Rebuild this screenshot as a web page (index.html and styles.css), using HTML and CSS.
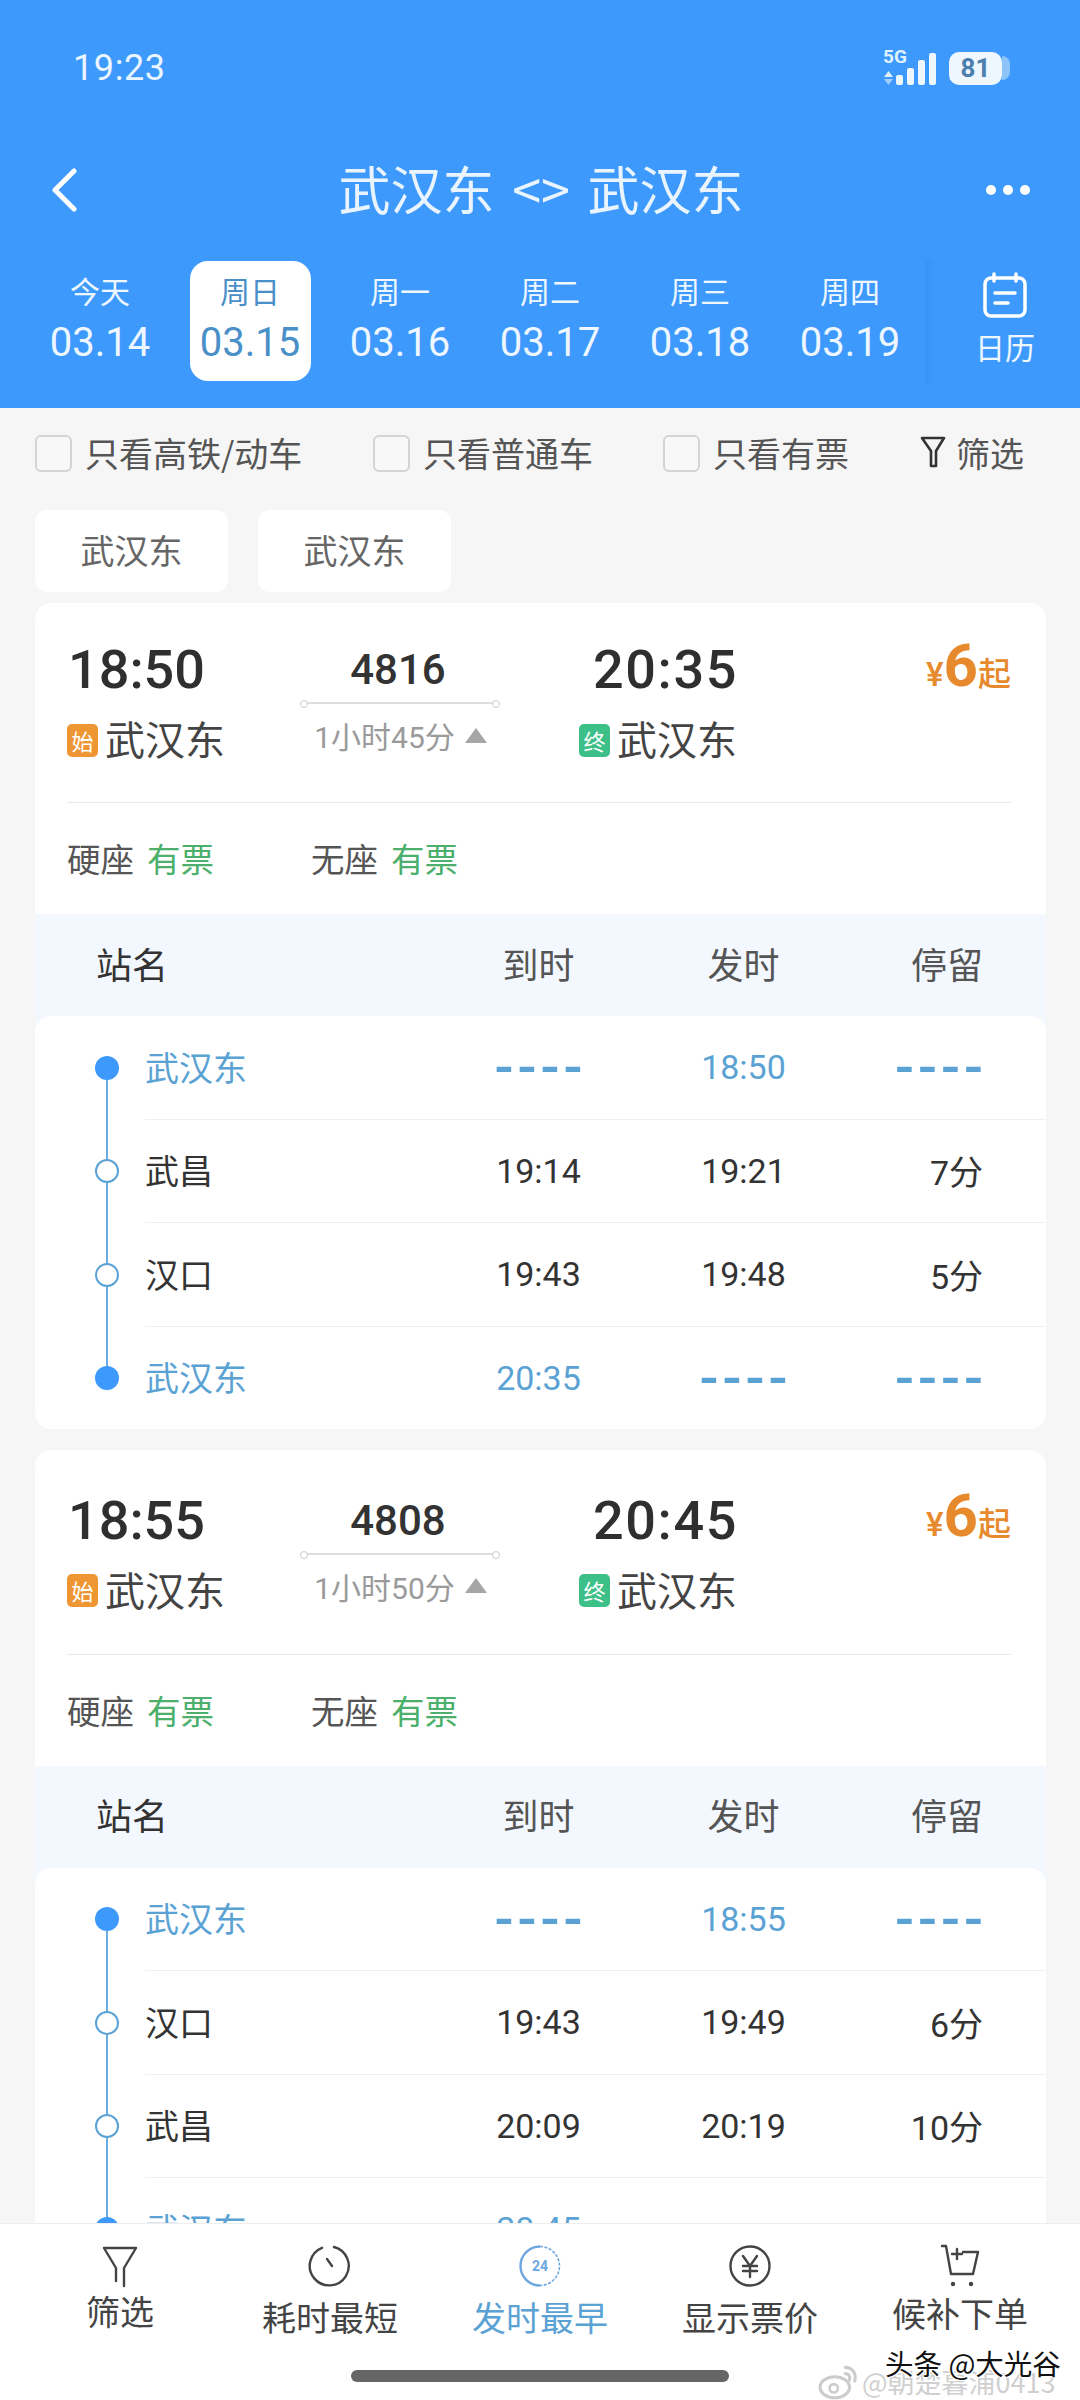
FILE: index.html
```html
<!DOCTYPE html>
<html lang="zh-CN">
<head>
<meta charset="utf-8">
<title>武汉东 &lt;&gt; 武汉东</title>
<link rel="stylesheet" href="styles.css">
</head>
<body>
<div class="app">
  <header class="header">
    <div class="status">
      <span class="clock">19:23</span>
      <div class="status-right">
        <div class="net">
          <div class="net-label"><span class="net-5g">5G</span><svg class="net-arrows" viewBox="0 0 9 14"><path d="M4.5 0L9 6H0Z" fill="#dff0ff"/><path d="M4.5 14L9 8H0Z" fill="#9fd0fb"/></svg></div>
          <svg class="bars" viewBox="0 0 40 32"><rect x="0" y="22" width="7" height="10" rx="2"/><rect x="11" y="15" width="7" height="17" rx="2"/><rect x="22" y="7" width="7" height="25" rx="2"/><rect x="33" y="0" width="7" height="32" rx="2"/></svg>
        </div>
        <div class="battery"><span class="battery-level">81</span><span class="battery-cap"></span></div>
      </div>
    </div>
    <div class="titlebar">
      <svg class="back" viewBox="0 0 28 44"><path d="M24 3L5 22l19 19" fill="none" stroke="#fff" stroke-width="5" stroke-linecap="round" stroke-linejoin="round"/></svg>
      <h1 class="title">武汉东 &lt;&gt; 武汉东</h1>
      <div class="more"><i></i><i></i><i></i></div>
    </div>
    <div class="dates">
      <div class="date"><span class="dow">今天</span><span class="day">03.14</span></div>
      <div class="date date-on"><span class="dow">周日</span><span class="day">03.15</span></div>
      <div class="date"><span class="dow">周一</span><span class="day">03.16</span></div>
      <div class="date"><span class="dow">周二</span><span class="day">03.17</span></div>
      <div class="date"><span class="dow">周三</span><span class="day">03.18</span></div>
      <div class="date"><span class="dow">周四</span><span class="day">03.19</span></div>
      <div class="cal">
        <svg class="cal-icon" viewBox="0 0 46 46"><path d="M12 2v7M34 2v7" stroke="#fff" stroke-width="3.5" stroke-linecap="round"/><rect x="3" y="6" width="40" height="38" rx="6" fill="none" stroke="#fff" stroke-width="3.5"/><path d="M13 21h20M13 31h13" stroke="#fff" stroke-width="3.5" stroke-linecap="round"/></svg>
        <span class="cal-label">日历</span>
      </div>
    </div>
  </header>

  <main class="main">
    <div class="filters">
      <label class="check"><span class="box"></span>只看高铁/动车</label>
      <label class="check"><span class="box"></span>只看普通车</label>
      <label class="check"><span class="box"></span>只看有票</label>
      <div class="filter-link">
        <svg class="filter-icon" viewBox="0 0 26 32"><path d="M2 2h22l-8 13v15h-5V15Z" fill="none" stroke="#333" stroke-width="2.6" stroke-linejoin="round"/></svg>筛选
      </div>
    </div>
    <div class="chips"><span class="chip">武汉东</span><span class="chip">武汉东</span></div>

    <article class="card">
      <div class="trip">
        <div class="dep-time">18:50</div>
        <div class="num">4816</div>
        <div class="arr-time">20:35</div>
        <div class="price"><small>¥</small><b>6</b><small class="qi">起</small></div>
        <div class="rail-line"></div>
        <div class="dep-st"><span class="tag tag-start">始</span>武汉东</div>
        <div class="dur">1小时45分<span class="tri"></span></div>
        <div class="arr-st"><span class="tag tag-end">终</span>武汉东</div>
      </div>
      <div class="seats">
        <div class="seat"><span>硬座</span><span class="avail">有票</span></div>
        <div class="seat"><span>无座</span><span class="avail">有票</span></div>
      </div>
      <div class="table">
        <div class="thead"><span class="th-name">站名</span><span class="c">到时</span><span class="c">发时</span><span class="r">停留</span></div>
        <div class="stops">
          <div class="stop stop-first stop-hi"><div class="rail"><i class="dot"></i></div><div class="cells"><span>武汉东</span><span class="c dash">----</span><span class="c">18:50</span><span class="r dash">----</span></div></div>
          <div class="stop"><div class="rail"><i class="dot ring"></i></div><div class="cells"><span>武昌</span><span class="c">19:14</span><span class="c">19:21</span><span class="r">7分</span></div></div>
          <div class="stop"><div class="rail"><i class="dot ring"></i></div><div class="cells"><span>汉口</span><span class="c">19:43</span><span class="c">19:48</span><span class="r">5分</span></div></div>
          <div class="stop stop-last stop-hi"><div class="rail"><i class="dot"></i></div><div class="cells"><span>武汉东</span><span class="c">20:35</span><span class="c dash">----</span><span class="r dash">----</span></div></div>
        </div>
      </div>
    </article>

    <article class="card card-next">
      <div class="trip">
        <div class="dep-time">18:55</div>
        <div class="num">4808</div>
        <div class="arr-time">20:45</div>
        <div class="price"><small>¥</small><b>6</b><small class="qi">起</small></div>
        <div class="rail-line"></div>
        <div class="dep-st"><span class="tag tag-start">始</span>武汉东</div>
        <div class="dur">1小时50分<span class="tri"></span></div>
        <div class="arr-st"><span class="tag tag-end">终</span>武汉东</div>
      </div>
      <div class="seats">
        <div class="seat"><span>硬座</span><span class="avail">有票</span></div>
        <div class="seat"><span>无座</span><span class="avail">有票</span></div>
      </div>
      <div class="table">
        <div class="thead"><span class="th-name">站名</span><span class="c">到时</span><span class="c">发时</span><span class="r">停留</span></div>
        <div class="stops">
          <div class="stop stop-first stop-hi"><div class="rail"><i class="dot"></i></div><div class="cells"><span>武汉东</span><span class="c dash">----</span><span class="c">18:55</span><span class="r dash">----</span></div></div>
          <div class="stop"><div class="rail"><i class="dot ring"></i></div><div class="cells"><span>汉口</span><span class="c">19:43</span><span class="c">19:49</span><span class="r">6分</span></div></div>
          <div class="stop"><div class="rail"><i class="dot ring"></i></div><div class="cells"><span>武昌</span><span class="c">20:09</span><span class="c">20:19</span><span class="r">10分</span></div></div>
          <div class="stop stop-last stop-hi"><div class="rail"><i class="dot"></i></div><div class="cells"><span>武汉东</span><span class="c">20:45</span><span class="c dash">----</span><span class="r dash">----</span></div></div>
        </div>
      </div>
    </article>
  </main>

  <nav class="tabbar">
    <div class="tab tab-up">
      <svg class="tab-icon" viewBox="0 0 44 44"><path d="M6 4h32L26 24v18M18 37V24L6 4" fill="none" stroke="#444" stroke-width="2.4" stroke-linecap="round" stroke-linejoin="round"/></svg>
      <span>筛选</span>
    </div>
    <div class="tab">
      <svg class="tab-icon" viewBox="0 0 44 44"><path d="M26 3a19.5 19.5 0 1 1-12 .8" fill="none" stroke="#444" stroke-width="2.4" stroke-linecap="round"/><path d="M19 15l5 7" stroke="#444" stroke-width="2.4" stroke-linecap="round"/></svg>
      <span>耗时最短</span>
    </div>
    <div class="tab tab-on">
      <svg class="tab-icon" viewBox="0 0 44 44"><path d="M22 2.5a19.5 19.5 0 0 1 0 39" fill="none" stroke="#6ea6e0" stroke-width="1.6" stroke-dasharray="3 1.5"/><path d="M22 41.5a19.5 19.5 0 0 1 0-39" fill="none" stroke="#6ea6e0" stroke-width="2.4"/><text x="22" y="27" class="tab-24">24</text></svg>
      <span>发时最早</span>
    </div>
    <div class="tab">
      <svg class="tab-icon" viewBox="0 0 44 44"><circle cx="22" cy="22" r="19.5" fill="none" stroke="#444" stroke-width="2.4"/><path d="M15 12l7 10 7-10M22 22v11M15 22h14M15 27h14" fill="none" stroke="#444" stroke-width="2.4" stroke-linecap="round" stroke-linejoin="round"/></svg>
      <span>显示票价</span>
    </div>
    <div class="tab tab-up">
      <svg class="tab-icon" viewBox="0 0 44 44"><path d="M4 2h4l5 28h22l5-22H25M19 5v10M14 10h10" fill="none" stroke="#444" stroke-width="2.4" stroke-linecap="round" stroke-linejoin="round"/><circle cx="15" cy="40" r="2.2" fill="#444"/><circle cx="33" cy="40" r="2.2" fill="#444"/></svg>
      <span>候补下单</span>
    </div>
  </nav>
  <div class="homebar"></div>
  <div class="wm-back">
    <svg class="wm-logo" viewBox="0 0 40 34"><ellipse cx="16" cy="22" rx="14" ry="10" fill="none" stroke="#ccc" stroke-width="3"/><circle cx="15" cy="23" r="4" fill="none" stroke="#ccc" stroke-width="2.5"/><path d="M26 3c6 0 11 5 9 13M26 9c3 0 5 2 4 6" fill="none" stroke="#ccc" stroke-width="3" stroke-linecap="round"/></svg>
    <span>@朝楚暮浦0413</span>
  </div>
  <div class="wm-front">头条 @大光谷</div>
</div>
</body>
</html>
```
FILE: styles.css
```css
* { box-sizing: border-box; }
html, body { margin: 0; padding: 0; }
body {
  font-family: Roboto, "Noto Sans CJK SC", sans-serif;
  color: #333;
  background: #f6f6f6;
}
.app {
  position: relative;
  width: 1080px;
  height: 2400px;
  overflow: hidden;
  display: flex;
  flex-direction: column;
}

/* header */
.header { flex: none; height: 408px; background: #3d9afc; color: #fff; }
.status {
  height: 136px;
  padding: 0 70px 0 73px;
  display: flex;
  align-items: center;
  justify-content: space-between;
}
.clock { font-size: 36px; color: #eaf5ff; letter-spacing: 0.6px; }
.status-right { display: flex; align-items: center; gap: 13px; }
.net { display: grid; width: 53px; height: 36px; margin-top: -3px; }
.net-label { grid-area: 1 / 1; display: flex; flex-direction: column; justify-content: space-between; align-items: flex-start; }
.net-5g { font-size: 19px; line-height: 16px; font-weight: 700; color: #dff0ff; }
.net-arrows { width: 9px; height: 14px; display: block; margin-left: 1px; }
.bars { grid-area: 1 / 1; justify-self: end; align-self: end; width: 40px; height: 32px; fill: #eef7ff; }
.battery { display: flex; align-items: center; }
.battery-level {
  width: 53px; height: 33px;
  border-radius: 10px;
  background: #eef6fe;
  color: #4a7fae;
  font-size: 26px; font-weight: 700;
  line-height: 33px; text-align: center;
}
.battery-cap { width: 8px; height: 24px; background: #8ec4fa; border-radius: 0 8px 8px 0; }

.titlebar { height: 108px; padding: 0 50px; display: flex; align-items: center; justify-content: space-between; }
.back { width: 28px; height: 44px; }
.title {
  margin: -5px 0 0 18px; font-size: 52px; font-weight: 400; color: #e9f4ff;
  font-family: "Noto Sans CJK SC", sans-serif;
  word-spacing: 6px;
}
.more { display: flex; gap: 7px; }
.more i { width: 10px; height: 10px; border-radius: 50%; background: #fff; display: block; }

.dates { display: flex; padding: 17px 0 0 25px; height: 137px; }
.date {
  width: 150px; height: 120px;
  display: flex; flex-direction: column; align-items: center;
  color: #eef7ff;
  position: relative;
}
.dow { font-size: 30px; line-height: 40px; margin-top: 9px; font-family: "Noto Sans CJK SC", sans-serif; }
.day { font-size: 40px; line-height: 46px; margin-top: 10px; }
.date-on { color: #4a90c8; }
.date-on::before {
  content: ""; position: absolute; top: 0; left: 15px;
  width: 121px; height: 120px; background: #fff; border-radius: 18px;
}
.date-on span { position: relative; }
.cal {
  flex: 1;
  margin-top: -3px;
  height: 125px;
  display: flex; flex-direction: column; align-items: center;
  background: linear-gradient(to right, rgba(40,120,220,.18), rgba(40,120,220,0) 14px);
  padding-left: 5px;
}
.cal-icon { width: 46px; height: 46px; margin-top: 14px; }
.cal-label { font-size: 30px; line-height: 40px; margin-top: 8px; color: #eef7ff; font-family: "Noto Sans CJK SC", sans-serif; }

/* list */
.main { flex: 1; min-height: 0; overflow: hidden; padding: 0 34px 0 35px; }
.filters {
  height: 88px;
  display: grid;
  grid-template-columns: 338px 290px 257px auto;
  align-items: center;
  font-size: 34px; color: #555;
  font-family: "Noto Sans CJK SC", sans-serif;
}
.check { display: flex; align-items: center; gap: 13px; white-space: nowrap; }
.box { width: 37px; height: 37px; border: 2px solid #d4d4d4; border-radius: 6px; background: #f8f8f8; flex: none; margin-top: 2px; }
.filter-link { display: flex; align-items: center; gap: 10px; white-space: nowrap; }
.filter-icon { width: 26px; height: 32px; }
.chips { display: flex; gap: 30px; margin: 14px 0 11px; }
.chip {
  width: 193px; height: 82px; border-radius: 12px; background: #fff;
  display: flex; align-items: center; justify-content: center;
  font-size: 34px; color: #666; padding-bottom: 3px;
  font-family: "Noto Sans CJK SC", sans-serif;
}

.card { background: #fff; border-radius: 16px; overflow: hidden; margin-bottom: 21px; }
.trip {
  margin: 0 35px 0 32px;
  padding: 42px 0 33px;
  border-bottom: 1px solid #e9e9e9;
  display: grid;
  grid-template-columns: 229px 204px 240px 1fr;
  grid-template-rows: 50px 16px 58px;
  align-items: center;
}
.card-next .trip { padding: 46px 0 34px; }
.dep-time, .arr-time { font-size: 54px; font-weight: 500; color: #2f2f2f; line-height: 50px; white-space: nowrap; }
.dep-time { padding-left: 1px; }
.arr-time { text-align: right; padding-right: 2px; letter-spacing: 1.6px; }
.num { font-size: 42px; font-weight: 500; color: #333; text-align: center; line-height: 50px; }
.price { color: #e78a2d; text-align: right; line-height: 50px; white-space: nowrap; padding-top: 6px; }
.price small { font-size: 33px; font-weight: 500; }
.price b { font-size: 60px; font-weight: 700; }
.price .qi { font-family: "Noto Sans CJK SC", sans-serif; }
.rail-line { grid-column: 2; grid-row: 2; height: 2px; margin-left: 4px; background: #ddd; position: relative; }
.rail-line::before, .rail-line::after {
  content: ""; position: absolute; top: -2px; width: 6px; height: 6px;
  border: 1px solid #ccc; border-radius: 50%; background: #fff;
}
.rail-line::before { left: 0; }
.rail-line::after { right: 0; }
.dep-st, .arr-st {
  grid-row: 3;
  display: flex; align-items: center; gap: 7px;
  font-size: 40px; color: #444; white-space: nowrap;
  font-family: "Noto Sans CJK SC", sans-serif;
}
.dep-st { grid-column: 1; padding-bottom: 4px; }
.arr-st { grid-column: 3; justify-content: flex-end; padding-right: 3px; padding-bottom: 4px; }
.tag {
  width: 31px; height: 33px; border-radius: 5px; color: #fff;
  font-size: 22px; line-height: 33px; text-align: center; margin-top: 4px;
}
.tag-start { background: #ee9633; }
.tag-end { background: #3cc088; }
.dur {
  grid-column: 2; grid-row: 3;
  display: flex; align-items: center; justify-content: center; gap: 10px;
  font-size: 30px; color: #9a9a9a; margin: -10px 0 0 5px; white-space: nowrap;
  font-family: Roboto, "Noto Sans CJK SC", sans-serif;
}
.tri { width: 0; height: 0; border-left: 11px solid transparent; border-right: 11px solid transparent; border-bottom: 15px solid #a6a6a6; }

.seats { height: 111px; padding: 0 0 2px 32px; display: flex; align-items: center; font-size: 33.5px; color: #555; font-family: "Noto Sans CJK SC", sans-serif; }
.seat { width: 244px; display: flex; gap: 13px; }
.avail { color: #4cb06c; }

.table { background: #f3f8fe; }
.thead, .cells {
  display: grid;
  grid-template-columns: 1fr 205px 205px 137px;
  align-items: center;
  padding-right: 63px;
}
.thead {
  height: 102px; padding: 0 63px 5px 61px;
  font-size: 36px; color: #555;
  font-family: "Noto Sans CJK SC", sans-serif;
}
.th-name { color: #333; }
.c { text-align: center; }
.r { text-align: right; }
.stops { background: #fff; border-radius: 16px 16px 0 0; }
.stop { display: flex; height: 103.5px; }
.stop-last { height: 102px; }
.rail { flex: none; width: 110px; position: relative; display: flex; align-items: center; padding-left: 60px; }
.rail::before { content: ""; position: absolute; left: 71px; width: 2px; top: 0; bottom: 0; background: #6aace0; }
.stop-first .rail::before { top: 50%; }
.stop-last .rail::before { bottom: 50%; }
.dot { position: relative; width: 24px; height: 24px; border-radius: 50%; background: #3d9afc; display: block; }
.ring { background: #fff; border: 2px solid #5ba3d6; }
.cells {
  flex: 1;
  border-bottom: 1px solid #f0f0f0;
  font-size: 34px; color: #333;
  font-family: Roboto, "Noto Sans CJK SC", sans-serif;
}
.stop-last .cells { border-bottom: 0; }
.cells span:first-child { font-size: 34px; padding-bottom: 2px; font-family: "Noto Sans CJK SC", sans-serif; }
.stop-hi .cells { color: #5ba2d4; }
.dash { font-size: 56px; line-height: 40px; font-weight: 500; letter-spacing: 4px; }
.dash.r { margin-right: -4px; }
.dash.c { padding-left: 4px; }

/* bottom bar */
.tabbar {
  flex: none; height: 177px;
  background: #fff;
  border-top: 1px solid #eee;
  display: grid;
  grid-template-columns: repeat(5, 210px);
  padding: 0 15px;
  position: relative;
  z-index: 1;
  font-family: "Noto Sans CJK SC", sans-serif;
}
.tab {
  display: flex; flex-direction: column; align-items: center;
  padding-top: 20px;
  font-size: 34px; color: #444;
  line-height: 44px;
}
.tab span { margin-top: 7px; }
.tab-up span { margin-top: 1px; }
.tab-up:last-child span { margin-top: 3px; }
.tab-on { color: #5ba2d4; }
.tab-icon { width: 44px; height: 44px; flex: none; }
.tab-24 { font-size: 14px; font-weight: 700; fill: #6ea6e0; text-anchor: middle; font-family: Roboto, sans-serif; }
.homebar {
  position: absolute; left: 351px; top: 2370px;
  width: 378px; height: 12px; border-radius: 6px; background: #666;
  z-index: 2;
}
.wm-back {
  position: absolute; left: 818px; top: 2362px; z-index: 2;
  display: flex; align-items: center; gap: 2px;
  font-size: 27px; color: #d0d0d0; white-space: nowrap;
  font-family: "Noto Sans CJK SC", sans-serif;
}
.wm-logo { width: 42px; height: 36px; }
.wm-front {
  position: absolute; left: 885px; top: 2342px; z-index: 3;
  font-size: 28.5px; color: #111; white-space: nowrap;
  text-shadow: 1px 1px 0 #fff, -1px -1px 0 #fff, 1px -1px 0 #fff, -1px 1px 0 #fff;
  font-family: "Noto Sans CJK SC", sans-serif;
}
```
